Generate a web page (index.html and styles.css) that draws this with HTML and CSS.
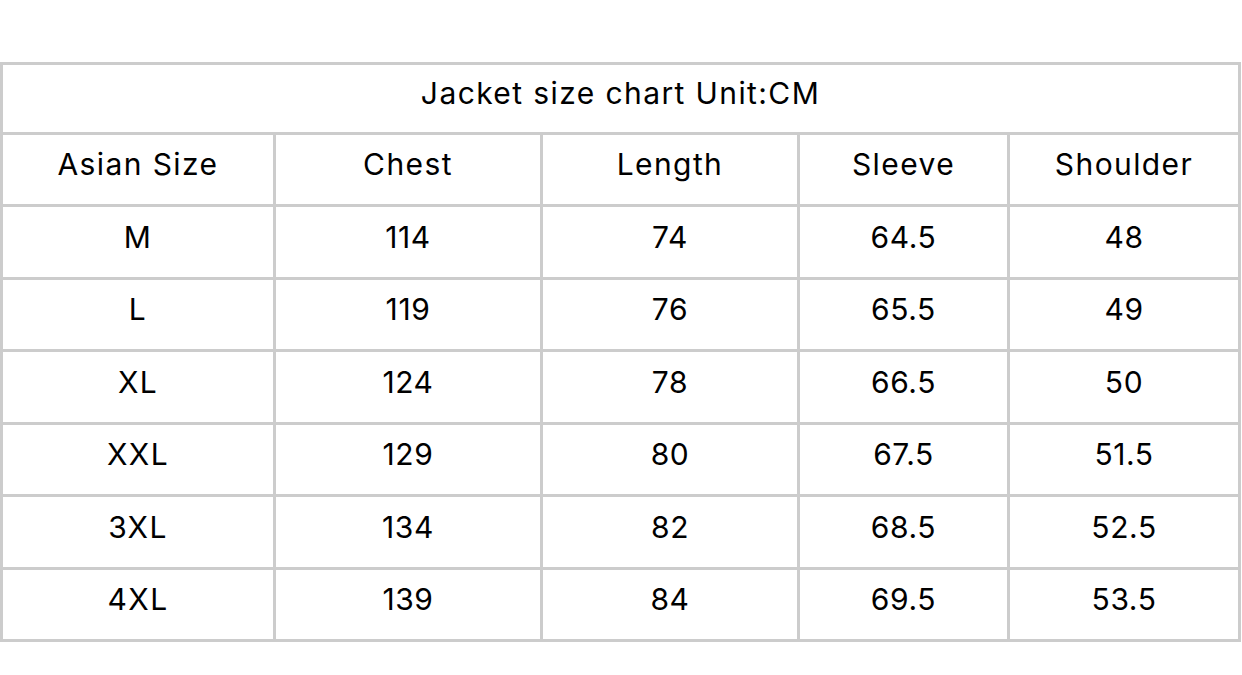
FILE: index.html
```html
<!DOCTYPE html>
<html>
<head>
<meta charset="utf-8">
<link rel="stylesheet" href="styles.css">
</head>
<body>
<table class="chart">
  <colgroup>
    <col class="c1"><col class="c2"><col class="c3"><col class="c4"><col class="c5">
  </colgroup>
  <tr class="title-row label"><td colspan="5">Jacket size chart Unit:CM</td></tr>
  <tr class="label"><td>Asian Size</td><td>Chest</td><td>Length</td><td>Sleeve</td><td>Shoulder</td></tr>
  <tr><td>M</td><td>114</td><td>74</td><td>64.5</td><td>48</td></tr>
  <tr><td>L</td><td>119</td><td>76</td><td>65.5</td><td>49</td></tr>
  <tr><td>XL</td><td>124</td><td>78</td><td>66.5</td><td>50</td></tr>
  <tr><td>XXL</td><td>129</td><td>80</td><td>67.5</td><td>51.5</td></tr>
  <tr><td>3XL</td><td>134</td><td>82</td><td>68.5</td><td>52.5</td></tr>
  <tr><td>4XL</td><td>139</td><td>84</td><td>69.5</td><td>53.5</td></tr>
</table>
</body>
</html>
```
FILE: styles.css
```css
html, body {
  margin: 0;
  padding: 0;
  background: #fff;
}
body {
  padding-top: 62px;
  font-family: Inter, "Noto Sans", sans-serif;
  color: #000;
}
.chart {
  border-collapse: collapse;
  width: 1238px;
  table-layout: fixed;
}
.c1 { width: 273px; }
.c2 { width: 267px; }
.c3 { width: 257px; }
.c4 { width: 210px; }
.c5 { width: 231px; }
.chart td {
  border: 3px solid #cccccc;
  text-align: center;
  vertical-align: middle;
  font-size: 30px;
  height: 59.5px;
  padding: 0 0 10px 0;
  line-height: 1;
  letter-spacing: 0.6px;
}
.chart .label td,
.chart td:first-child {
  letter-spacing: 1.4px;
}
.chart .title-row td {
  height: 56.5px;
}
```
